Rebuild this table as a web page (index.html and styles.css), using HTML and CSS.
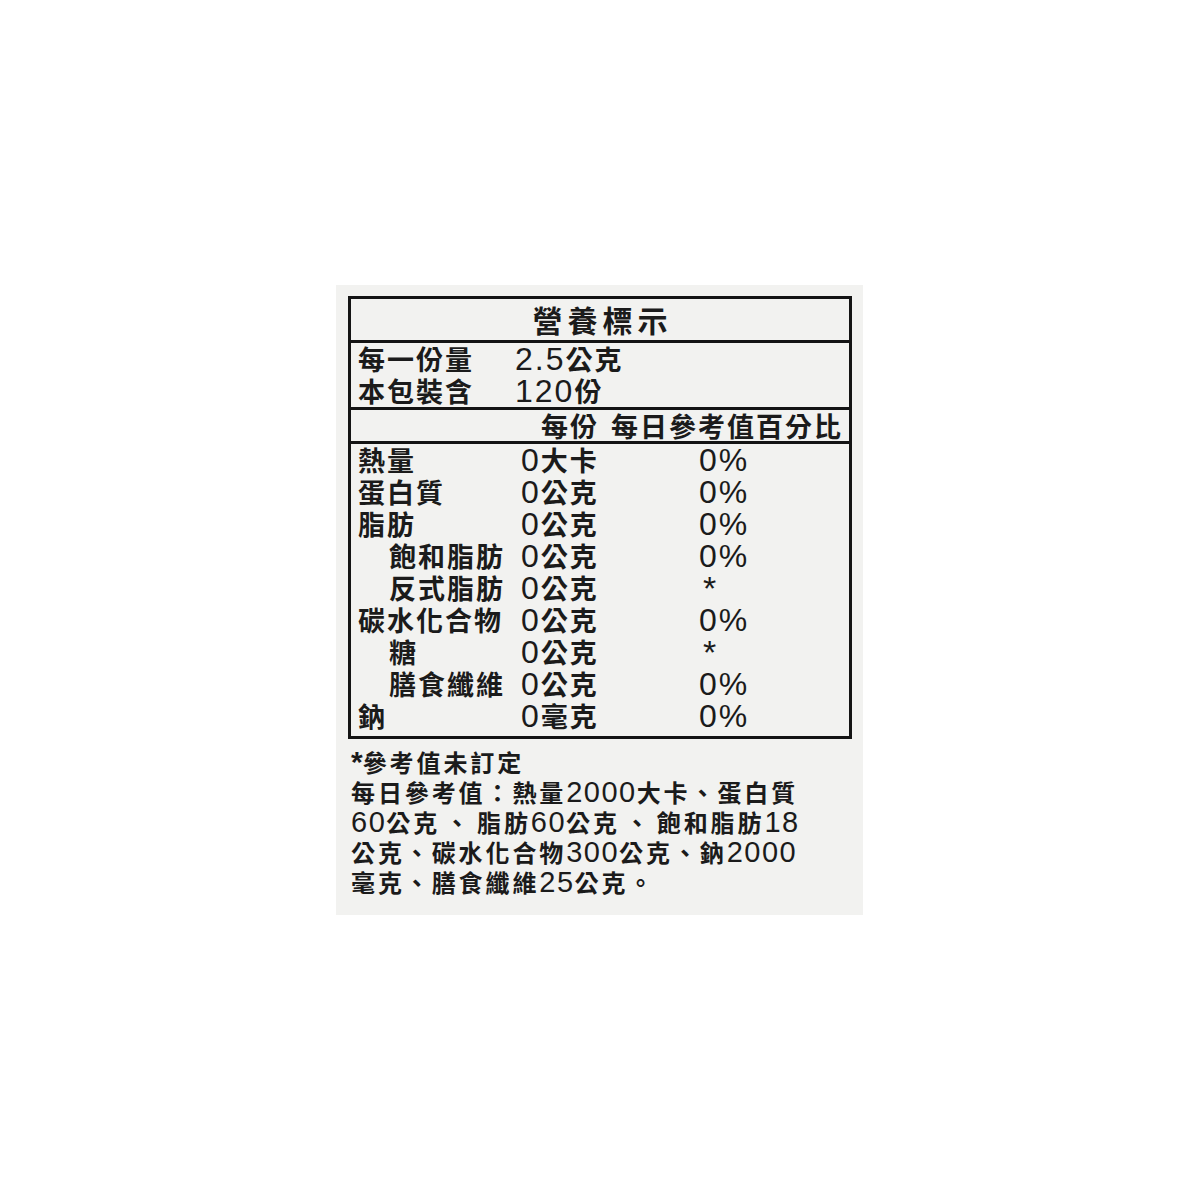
FILE: index.html
```html
<!DOCTYPE html>
<html lang="zh-Hant">
<head>
<meta charset="utf-8">
<title>營養標示</title>
<link rel="stylesheet" href="styles.css">
</head>
<body>
<div class="panel">
  <div class="label">
    <div class="title">營養標示</div>
    <div class="serving">
      <div class="srow"><span class="name">每一份量</span><span class="val v1"><span class="n">2.5</span>公克</span></div>
      <div class="srow"><span class="name">本包裝含</span><span class="val"><span class="n">120</span>份</span></div>
    </div>
    <div class="head"><span>每份</span><span>每日參考值百分比</span></div>
    <div class="rows">
      <div class="row"><span class="name">熱量</span><span class="val"><span class="n">0</span>大卡</span><span class="pct n">0%</span></div>
      <div class="row"><span class="name">蛋白質</span><span class="val"><span class="n">0</span>公克</span><span class="pct n">0%</span></div>
      <div class="row"><span class="name">脂肪</span><span class="val"><span class="n">0</span>公克</span><span class="pct n">0%</span></div>
      <div class="row"><span class="name sub">飽和脂肪</span><span class="val"><span class="n">0</span>公克</span><span class="pct n">0%</span></div>
      <div class="row"><span class="name sub">反式脂肪</span><span class="val"><span class="n">0</span>公克</span><span class="pct n star">*</span></div>
      <div class="row"><span class="name">碳水化合物</span><span class="val"><span class="n">0</span>公克</span><span class="pct n">0%</span></div>
      <div class="row"><span class="name sub">糖</span><span class="val"><span class="n">0</span>公克</span><span class="pct n star">*</span></div>
      <div class="row"><span class="name sub">膳食纖維</span><span class="val"><span class="n">0</span>公克</span><span class="pct n">0%</span></div>
      <div class="row"><span class="name">鈉</span><span class="val"><span class="n">0</span>毫克</span><span class="pct n">0%</span></div>
    </div>
  </div>
  <div class="notes">
    <div class="line"><span class="ast">*</span>參考值未訂定</div>
    <div class="line">每日參考值：熱量<span class="m">2000</span>大卡、蛋白質</div>
    <div class="line"><span class="m">60</span>公克<span class="gap">、</span>脂肪<span class="m">60</span>公克<span class="gap">、</span>飽和脂肪<span class="m">18</span></div>
    <div class="line">公克、碳水化合物<span class="m">300</span>公克、鈉<span class="m">2000</span></div>
    <div class="line">毫克、膳食纖維<span class="m">25</span>公克。</div>
  </div>
</div>
</body>
</html>
```
FILE: styles.css
```css
html, body {
  margin: 0;
  padding: 0;
  background: #ffffff;
}
body {
  font-family: "Noto Sans CJK TC", "Liberation Sans", sans-serif;
  color: #1b1b1b;
}
.panel {
  box-sizing: border-box;
  margin-left: 336px;
  margin-top: 285px;
  width: 527px;
  height: 630px;
  background: #f2f2f0;
  padding: 11px 0 0 12px;
}
.label {
  box-sizing: border-box;
  width: 504px;
  height: 443px;
  border: 3px solid #141414;
  font-size: 27px;
  letter-spacing: 2px;
  font-weight: 700;
}
.n {
  font-family: "Liberation Sans", "Noto Sans CJK TC", sans-serif;
  font-size: 32px;
  letter-spacing: 2px;
  font-weight: 400;
}
.title {
  height: 41px;
  line-height: 41px;
  border-bottom: 3px solid #141414;
  text-align: center;
  font-size: 30px;
  font-weight: 700;
  letter-spacing: 5px;
  padding-left: 5px;
}
.serving {
  height: 64px;
  border-bottom: 3px solid #141414;
}
.srow {
  display: grid;
  grid-template-columns: 164px 1fr;
  height: 32px;
  line-height: 32px;
}
.srow .name {
  padding-left: 7px;
}
.head {
  height: 31px;
  line-height: 31px;
  border-bottom: 3px solid #141414;
  display: flex;
  justify-content: flex-end;
  gap: 12px;
  padding-right: 6px;
}
.rows {
  height: 292px;
}
.row {
  display: grid;
  grid-template-columns: 170px 178px 1fr;
  height: 32px;
  line-height: 32px;
}
.row .name {
  padding-left: 7px;
  white-space: nowrap;
}
.row .name.sub {
  padding-left: 38px;
}
.val, .name, .pct {
  display: block;
  white-space: nowrap;
}
.star {
  padding-left: 4px;
  font-size: 34px;
}
.notes {
  margin-top: 8px;
  padding-left: 3px;
  font-size: 24px;
  letter-spacing: 2.9px;
  line-height: 30px;
  font-weight: 700;
}
.line {
  white-space: nowrap;
  height: 30px;
}
.m {
  font-family: "Liberation Sans", "Noto Sans CJK TC", sans-serif;
  font-size: 29px;
  line-height: 28px;
  letter-spacing: 1.5px;
  font-weight: 400;
}
.gap {
  margin: 0 5px;
}
.ast {
  font-family: "Liberation Sans", sans-serif;
  font-size: 30px;
  line-height: 28px;
  font-weight: 700;
  letter-spacing: 0;
}
```
